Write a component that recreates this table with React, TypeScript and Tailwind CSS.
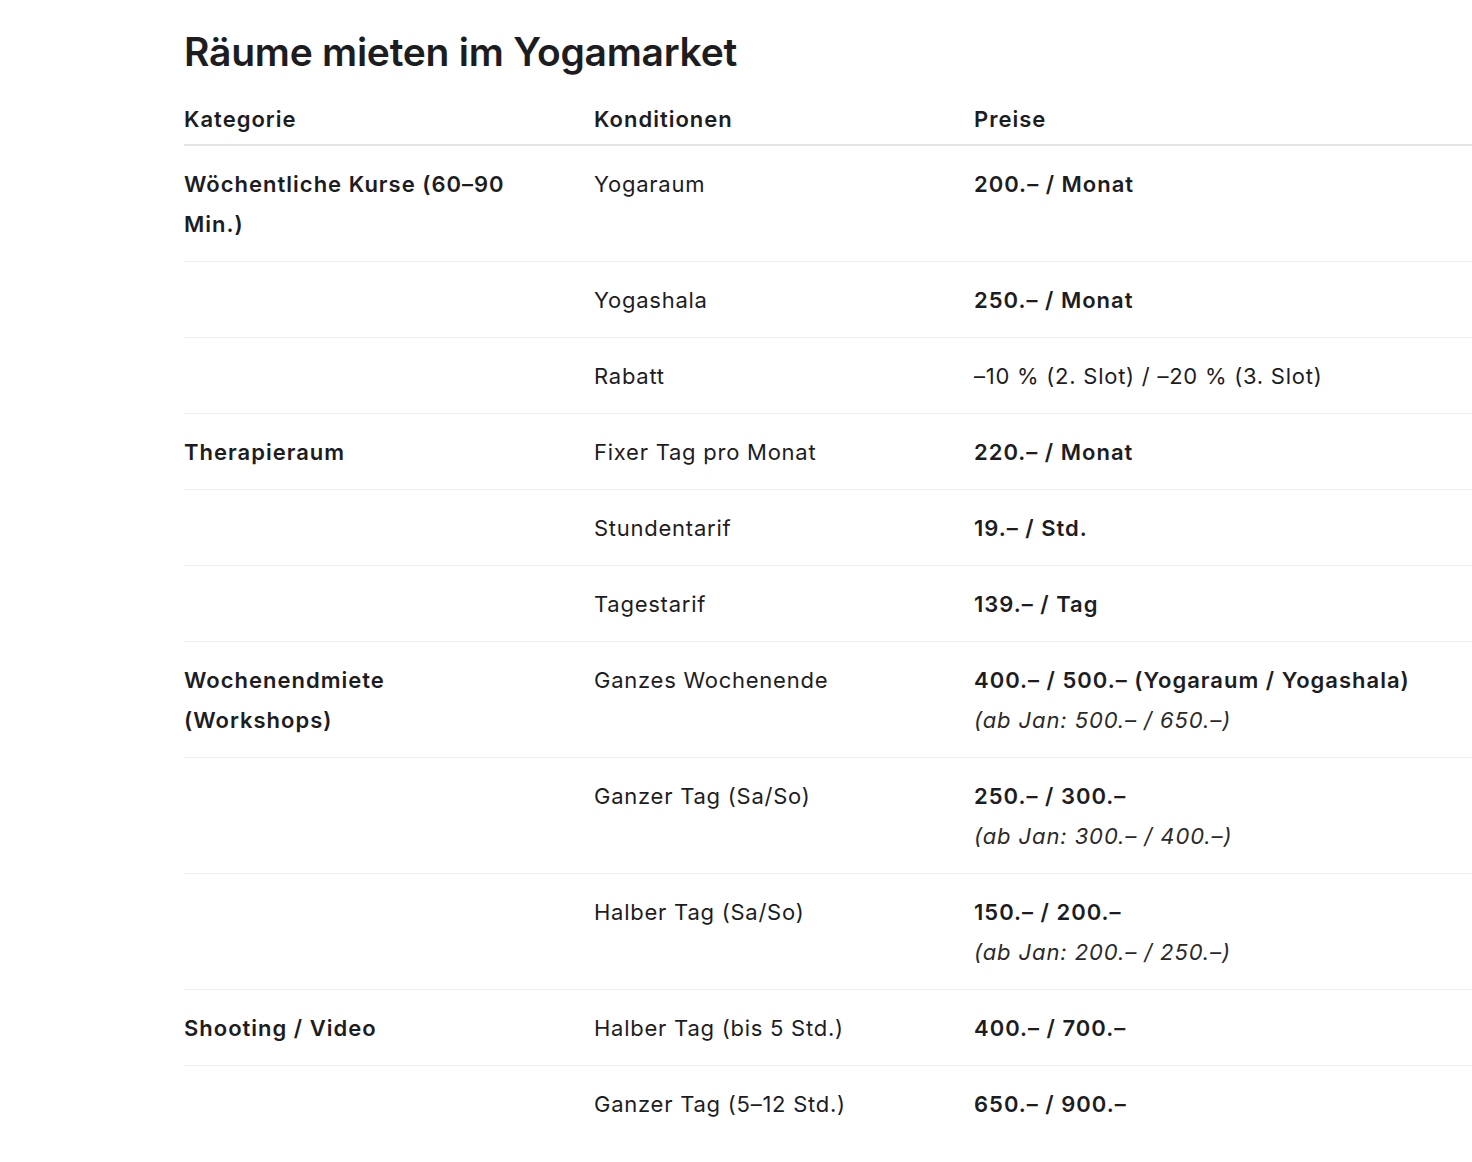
import React from "react";

type Row = {
  cat?: string;
  cond: string;
  price: string;
  note?: string;
  plain?: boolean;
};

const rows: Row[] = [
  { cat: "Wöchentliche Kurse (60–90 Min.)", cond: "Yogaraum", price: "200.– / Monat" },
  { cond: "Yogashala", price: "250.– / Monat" },
  { cond: "Rabatt", price: "–10 % (2. Slot) / –20 % (3. Slot)", plain: true },
  { cat: "Therapieraum", cond: "Fixer Tag pro Monat", price: "220.– / Monat" },
  { cond: "Stundentarif", price: "19.– / Std." },
  { cond: "Tagestarif", price: "139.– / Tag" },
  {
    cat: "Wochenendmiete (Workshops)",
    cond: "Ganzes Wochenende",
    price: "400.– / 500.– (Yogaraum / Yogashala)",
    note: "(ab Jan: 500.– / 650.–)",
  },
  { cond: "Ganzer Tag (Sa/So)", price: "250.– / 300.–", note: "(ab Jan: 300.– / 400.–)" },
  { cond: "Halber Tag (Sa/So)", price: "150.– / 200.–", note: "(ab Jan: 200.– / 250.–)" },
  { cat: "Shooting / Video", cond: "Halber Tag (bis 5 Std.)", price: "400.– / 700.–" },
  { cond: "Ganzer Tag (5–12 Std.)", price: "650.– / 900.–" },
];

export default function App() {
  return (
    <div className="min-h-screen bg-white text-[#1d1d1f] font-['Inter',sans-serif] overflow-hidden">
      <div className="pl-[184px] pt-[28px]">
        <h1 className="text-[39px] leading-[48px] font-semibold tracking-[-0.25px]">
          Räume mieten im Yogamarket
        </h1>

        <div className="mt-[23px] w-[1288px] text-[22px] leading-[40px] tracking-[0.75px]">
          {/* Kopfzeile */}
          <div className="grid grid-cols-[410px_380px_1fr] border-b-2 border-[#e5e5e5] pb-[5px] font-semibold tracking-[1px]">
            <div>Kategorie</div>
            <div>Konditionen</div>
            <div>Preise</div>
          </div>

          {rows.map((r, i) => (
            <div
              key={i}
              className="grid grid-cols-[410px_380px_1fr] border-b border-[#f0f0f0] last:border-b-0 pt-[18px] pb-[17px]"
            >
              <div className="font-semibold tracking-[1px] pr-[60px]">{r.cat ?? ""}</div>
              <div>{r.cond}</div>
              <div>
                <div className={r.plain ? "" : "font-semibold tracking-[1px]"}>{r.price}</div>
                {r.note && <div className="italic text-[#2a2a2a] tracking-[0.9px]">{r.note}</div>}
              </div>
            </div>
          ))}
        </div>
      </div>
    </div>
  );
}
